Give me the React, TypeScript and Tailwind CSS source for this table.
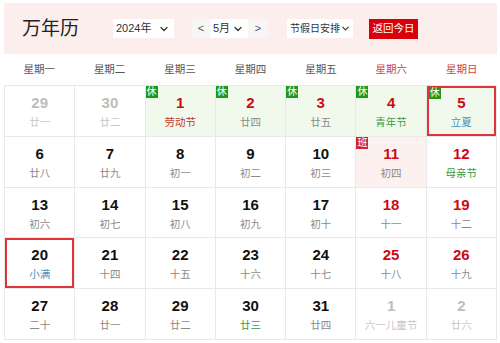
import { ChevronDown } from 'lucide-react';

type Day = {
  n: number;
  sub: string;
  other?: boolean;
  red?: boolean;
  subColor?: string;
  badge?: '休' | '班';
  bg?: string;
  picked?: boolean;
};

const weekdays = ['星期一', '星期二', '星期三', '星期四', '星期五', '星期六', '星期日'];

const days: Day[] = [
  { n: 29, sub: '廿一', other: true },
  { n: 30, sub: '廿二', other: true },
  { n: 1, sub: '劳动节', red: true, subColor: 'text-[#c0392b]', badge: '休', bg: 'bg-[#f1f9ec]' },
  { n: 2, sub: '廿四', red: true, badge: '休', bg: 'bg-[#f1f9ec]' },
  { n: 3, sub: '廿五', red: true, badge: '休', bg: 'bg-[#f1f9ec]' },
  { n: 4, sub: '青年节', red: true, subColor: 'text-[#3c9a3c]', badge: '休', bg: 'bg-[#f1f9ec]' },
  { n: 5, sub: '立夏', red: true, subColor: 'text-[#4a90c0]', badge: '休', bg: 'bg-[#f1f9ec]', picked: true },
  { n: 6, sub: '廿八' },
  { n: 7, sub: '廿九' },
  { n: 8, sub: '初一' },
  { n: 9, sub: '初二' },
  { n: 10, sub: '初三' },
  { n: 11, sub: '初四', red: true, badge: '班', bg: 'bg-[#fdf1f0]' },
  { n: 12, sub: '母亲节', red: true, subColor: 'text-[#3c9a3c]' },
  { n: 13, sub: '初六' },
  { n: 14, sub: '初七' },
  { n: 15, sub: '初八' },
  { n: 16, sub: '初九' },
  { n: 17, sub: '初十' },
  { n: 18, sub: '十一', red: true },
  { n: 19, sub: '十二', red: true },
  { n: 20, sub: '小满', subColor: 'text-[#4a90c0]', picked: true },
  { n: 21, sub: '十四' },
  { n: 22, sub: '十五' },
  { n: 23, sub: '十六' },
  { n: 24, sub: '十七' },
  { n: 25, sub: '十八', red: true },
  { n: 26, sub: '十九', red: true },
  { n: 27, sub: '二十' },
  { n: 28, sub: '廿一' },
  { n: 29, sub: '廿二' },
  { n: 30, sub: '廿三', subColor: 'text-[#3c9a3c]' },
  { n: 31, sub: '廿四' },
  { n: 1, sub: '六一儿童节', other: true },
  { n: 2, sub: '廿六', other: true },
];

function Cell({ d }: { d: Day }) {
  const numColor = d.other ? 'text-[#bdbdbd]' : d.red ? 'text-[#cc0a14]' : 'text-[#111]';
  const subColor = d.other ? 'text-[#c8c8c8]' : d.subColor ?? 'text-[#8a8a8a]';
  return (
    <div
      className={`relative flex h-[50.8px] flex-col items-center border-r border-b border-[#e9e9e9] pt-[8px] ${d.bg ?? 'bg-white'}`}
    >
      {d.picked && <span className="absolute inset-0 border-2 border-[#e0343a]" />}
      {d.badge && (
        <span
          className={`absolute z-10 flex h-[12px] w-[12px] items-center justify-center text-[10px] leading-none text-white ${
            d.picked ? 'left-[2px] top-[1px]' : 'left-0 top-0'
          } ${d.badge === '休' ? 'bg-[#1d9a1d]' : 'bg-[#d2262e]'}`}
        >
          {d.badge}
        </span>
      )}
      <span className={`text-[15px] font-bold leading-[18px] ${numColor}`}>{d.n}</span>
      <span className={`mt-[2px] text-[10.5px] leading-[16px] ${subColor}`}>{d.sub}</span>
    </div>
  );
}

export default function App() {
  return (
    <div className="min-h-[343px] bg-white pl-[4px] pt-[3px] font-['Liberation_Sans','Noto_Sans_CJK_SC',sans-serif]">
      <div className="w-[493px]">
        <div className="flex h-[51px] items-center bg-[#fbeeec] pl-[18px] text-[12px] text-[#333]">
          <h1 className="w-[91px] text-[19px] leading-none text-[#222]">万年历</h1>
          <div className="flex h-[19px] w-[61px] items-center justify-between bg-white pl-[3px] pr-[4px] text-[11px]">
            <span>2024年</span>
            <ChevronDown size={12} strokeWidth={2.5} />
          </div>
          <div className="ml-[18px] flex h-[19px] items-center text-[11px]">
            <span className="flex h-full w-[18px] items-center justify-center bg-[#f6f6f6] text-[#555]">&lt;</span>
            <span className="flex h-full w-[38px] items-center justify-between bg-white pl-[3px] pr-[4px]">
              5月
              <ChevronDown size={12} strokeWidth={2.5} />
            </span>
            <span className="flex h-full w-[20px] items-center justify-center bg-[#f6f6f6] text-[#555]">&gt;</span>
          </div>
          <div className="ml-[19px] flex h-[19px] w-[66px] items-center justify-between whitespace-nowrap bg-white pl-[3px] pr-[2px] text-[10px]">
            <span>节假日安排</span>
            <ChevronDown size={11} strokeWidth={2.5} className="shrink-0" />
          </div>
          <button className="ml-[16px] flex h-[20px] w-[49px] items-center justify-center whitespace-nowrap bg-[#d9000c] text-[10.5px] text-white">
            返回今日
          </button>
        </div>
        <div className="grid h-[32px] grid-cols-7 border-b border-[#e9e9e9] text-[10.5px]">
          {weekdays.map((w, i) => (
            <div
              key={w}
              className={`flex items-center justify-center ${i >= 5 ? 'text-[#c9473f]' : 'text-[#555]'}`}
            >
              {w}
            </div>
          ))}
        </div>
        <div className="grid grid-cols-7 border-l border-[#e9e9e9]">
          {days.map((d, i) => (
            <Cell key={i} d={d} />
          ))}
        </div>
      </div>
    </div>
  );
}
